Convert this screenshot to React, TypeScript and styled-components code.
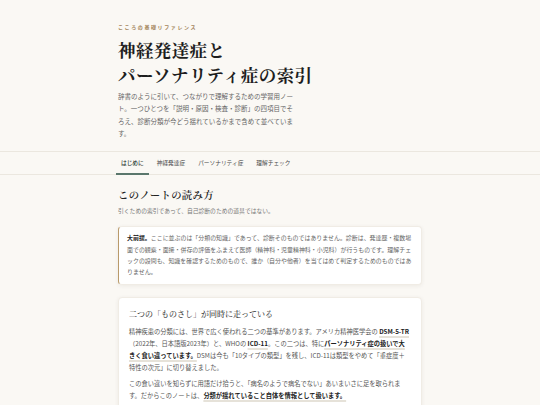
import styled, { createGlobalStyle } from "styled-components";

const GlobalStyle = createGlobalStyle`
  html, body {
    margin: 0;
    padding: 0;
    background: #faf8f4;
  }
  body {
    font-family: "Noto Sans CJK JP", "Noto Sans", sans-serif;
    color: #333;
    line-break: strict;
  }
`;

const serif = `"Noto Serif CJK JP", "Noto Serif JP", "Noto Sans CJK JP", serif`;

const Page = styled.div`
  min-height: 405px;
  background: #faf8f4;
`;

const Inner = styled.div`
  width: 304px;
  margin: 0 auto;
`;

const Header = styled.header`
  padding: 23px 0 12px;
  border-bottom: 1px solid #ebe7df;
`;

const Label = styled.div`
  font-size: 5px;
  line-height: 8px;
  letter-spacing: 1.6px;
  font-weight: 700;
  color: #a4855c;
`;

const Title = styled.h1`
  margin: 6px 0 0;
  font-family: ${serif};
  font-size: 17.5px;
  line-height: 25px;
  font-weight: 700;
  letter-spacing: 0.4px;
  color: #1e1e1e;
`;

const Lead = styled.p`
  margin: 3px 0 0;
  max-width: 177px;
  font-size: 6.5px;
  line-height: 12.3px;
  color: #666;
`;

const Nav = styled.nav`
  border-bottom: 1px solid #ebe7df;
`;

const Tabs = styled.div`
  display: flex;
  gap: 3px;
  margin-left: -2px;
`;

const Tab = styled.div<{ $active?: boolean }>`
  padding: 0 5px;
  height: 21px;
  display: flex;
  align-items: center;
  font-size: 5.7px;
  color: ${(p) => (p.$active ? "#2c3833" : "#4a4a4a")};
  font-weight: ${(p) => (p.$active ? 500 : 400)};
  border-bottom: 2px solid ${(p) => (p.$active ? "#5a776c" : "transparent")};
  margin-bottom: -1px;
`;

const Section = styled.section`
  padding-top: 11px;
`;

const SectionTitle = styled.h2`
  margin: 0;
  font-family: ${serif};
  font-size: 10.4px;
  line-height: 18px;
  font-weight: 600;
  letter-spacing: 0.3px;
  color: #222;
`;

const SectionSub = styled.p`
  margin: 2px 0 0;
  font-size: 5.8px;
  line-height: 10px;
  color: #777;
`;

const Card = styled.div<{ $accent?: boolean }>`
  margin-top: ${(p) => (p.$accent ? "10px" : "12px")};
  background: #fff;
  border-radius: 4px;
  border: 1px solid #f0ece5;
  border-left: ${(p) => (p.$accent ? "1.5px solid #b99a6a" : "1px solid #f0ece5")};
  box-shadow: 0 1px 4px rgba(60, 45, 20, 0.07);
  padding: ${(p) => (p.$accent ? "5px 9px 6px 8px" : "9px 10px 10px")};
`;

const Note = styled.p`
  margin: 0;
  font-size: 5.95px;
  line-height: 11.4px;
  color: #666;
  b {
    color: #222;
    font-weight: 700;
  }
`;

const CardTitle = styled.h3`
  margin: 0 0 5px;
  font-family: ${serif};
  font-size: 8px;
  line-height: 14px;
  font-weight: 500;
  color: #333;
`;

const Para = styled.p`
  margin: 0 0 4px;
  font-size: 6.26px;
  line-height: 12px;
  color: #555;
`;

const Mark = styled.strong`
  font-weight: 700;
  color: #222;
  line-height: 12px;
  text-decoration: underline;
  text-decoration-color: #e6e2d9;
  text-decoration-thickness: 1.5px;
  text-underline-offset: 1.5px;
`;

const tabs = ["はじめに", "神経発達症", "パーソナリティ症", "理解チェック"];

export default function App() {
  return (
    <Page>
      <GlobalStyle />
      <Header>
        <Inner>
          <Label>こころの基礎リファレンス</Label>
          <Title>
            神経発達症と
            <br />
            パーソナリティ症の索引
          </Title>
          <Lead>
            辞書のように引いて、つながりで理解するための学習用ノート。一つひとつを「説明・原因・検査・診断」の四項目でそろえ、診断分類が今どう揺れているかまで含めて並べています。
          </Lead>
        </Inner>
      </Header>
      <Nav>
        <Inner>
          <Tabs>
            {tabs.map((t, i) => (
              <Tab key={t} $active={i === 0}>
                {t}
              </Tab>
            ))}
          </Tabs>
        </Inner>
      </Nav>
      <Inner>
        <Section>
          <SectionTitle>このノートの読み方</SectionTitle>
          <SectionSub>引くための索引であって、自己診断のための道具ではない。</SectionSub>
          <Card $accent>
            <Note>
              <b>大前提。</b>
              ここに並ぶのは「分類の知識」であって、診断そのものではありません。診断は、発達歴・複数場面での観察・面接・併存の評価をふまえて医師（精神科・児童精神科・小児科）が行うものです。理解チェックの設問も、知識を確認するためのもので、誰か（自分や他者）を当てはめて判定するためのものではありません。
            </Note>
          </Card>
          <Card>
            <CardTitle>二つの「ものさし」が同時に走っている</CardTitle>
            <Para>
              精神疾患の分類には、世界で広く使われる二つの基準があります。アメリカ精神医学会の <Mark>DSM-5-TR</Mark>
              （2022年、日本語版2023年）と、WHOの <Mark>ICD-11</Mark>。この二つは、特に
              <Mark>パーソナリティ症の扱いで大きく食い違っています。</Mark>
              DSMは今も「10タイプの類型」を残し、ICD-11は類型をやめて「重症度＋特性の次元」に切り替えました。
            </Para>
            <Para>
              この食い違いを知らずに用語だけ拾うと、「病名のようで病名でない」あいまいさに足を取られます。だからこのノートは、
              <Mark>分類が揺れていること自体を情報として扱います。</Mark>
            </Para>
          </Card>
        </Section>
      </Inner>
    </Page>
  );
}
